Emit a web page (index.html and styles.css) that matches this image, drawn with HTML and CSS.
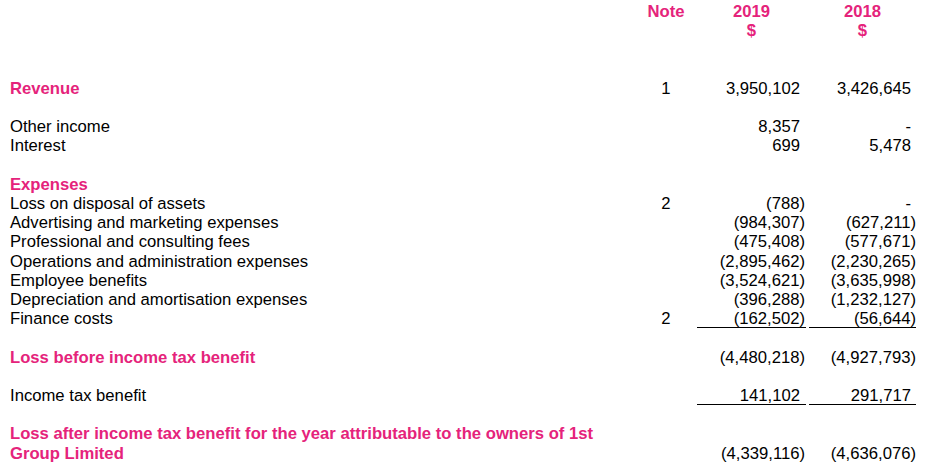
FILE: index.html
```html
<!DOCTYPE html>
<html>
<head>
<meta charset="utf-8">
<link rel="stylesheet" href="styles.css">
</head>
<body>
<div class="statement">
  <div class="row head">
    <div class="label"></div>
    <div class="note">Note</div>
    <div class="amt">2019<br>$</div>
    <div class="amt">2018<br>$</div>
  </div>
  <div class="row blank"></div>
  <div class="row blank"></div>

  <div class="row title">
    <div class="label">Revenue</div>
    <div class="note">1</div>
    <div class="num"><span class="pos">3,950,102</span></div>
    <div class="num last"><span class="pos">3,426,645</span></div>
  </div>
  <div class="row blank"></div>

  <div class="row">
    <div class="label">Other income</div>
    <div class="note"></div>
    <div class="num"><span class="pos">8,357</span></div>
    <div class="num last"><span class="pos">-</span></div>
  </div>
  <div class="row">
    <div class="label">Interest</div>
    <div class="note"></div>
    <div class="num"><span class="pos">699</span></div>
    <div class="num last"><span class="pos">5,478</span></div>
  </div>
  <div class="row blank"></div>

  <div class="row title">
    <div class="label">Expenses</div>
  </div>
  <div class="row">
    <div class="label">Loss on disposal of assets</div>
    <div class="note">2</div>
    <div class="num">(788)</div>
    <div class="num last"><span class="pos">-</span></div>
  </div>
  <div class="row">
    <div class="label">Advertising and marketing expenses</div>
    <div class="note"></div>
    <div class="num">(984,307)</div>
    <div class="num last">(627,211)</div>
  </div>
  <div class="row">
    <div class="label">Professional and consulting fees</div>
    <div class="note"></div>
    <div class="num">(475,408)</div>
    <div class="num last">(577,671)</div>
  </div>
  <div class="row">
    <div class="label">Operations and administration expenses</div>
    <div class="note"></div>
    <div class="num">(2,895,462)</div>
    <div class="num last">(2,230,265)</div>
  </div>
  <div class="row">
    <div class="label">Employee benefits</div>
    <div class="note"></div>
    <div class="num">(3,524,621)</div>
    <div class="num last">(3,635,998)</div>
  </div>
  <div class="row">
    <div class="label">Depreciation and amortisation expenses</div>
    <div class="note"></div>
    <div class="num">(396,288)</div>
    <div class="num last">(1,232,127)</div>
  </div>
  <div class="row">
    <div class="label">Finance costs</div>
    <div class="note">2</div>
    <div class="num ruled">(162,502)</div>
    <div class="num last ruled">(56,644)</div>
  </div>
  <div class="row blank"></div>

  <div class="row title">
    <div class="label">Loss before income tax benefit</div>
    <div class="note"></div>
    <div class="num">(4,480,218)</div>
    <div class="num last">(4,927,793)</div>
  </div>
  <div class="row blank"></div>

  <div class="row">
    <div class="label">Income tax benefit</div>
    <div class="note"></div>
    <div class="num ruled"><span class="pos">141,102</span></div>
    <div class="num last ruled"><span class="pos">291,717</span></div>
  </div>
  <div class="row blank"></div>

  <div class="row title">
    <div class="label">Loss after income tax benefit for the year attributable to the owners of 1st<br>Group Limited</div>
    <div class="note"></div>
    <div class="num bottom">(4,339,116)</div>
    <div class="num last bottom">(4,636,076)</div>
  </div>
</div>
</body>
</html>
```
FILE: styles.css
```css
html, body {
  margin: 0;
  padding: 0;
  background: #ffffff;
}

body {
  font-family: "Liberation Sans", Arial, sans-serif;
  font-size: 16.67px;
  line-height: 19.2px;
  color: #000000;
}

.statement {
  padding: 2px 0 0 10px;
}

.row {
  display: grid;
  grid-template-columns: 630px 57px 109px 110px;
  min-height: 19.2px;
}

.row > .num.last,
.row > .amt:last-child {
  margin-left: 3px;
}

.title .label,
.head {
  color: #e5237b;
  font-weight: bold;
}

.title .num,
.title .note {
  color: #000000;
  font-weight: normal;
}

.note {
  text-align: center;
  padding-right: 5px;
}

.head .amt {
  text-align: center;
}

.num {
  text-align: right;
  padding-right: 1px;
}

.num.last {
  padding-right: 0;
}

.pos {
  padding-right: 5px;
}

.ruled {
  box-shadow: inset 0 -1px 0 #000000;
}

.bottom {
  align-self: end;
}
```
